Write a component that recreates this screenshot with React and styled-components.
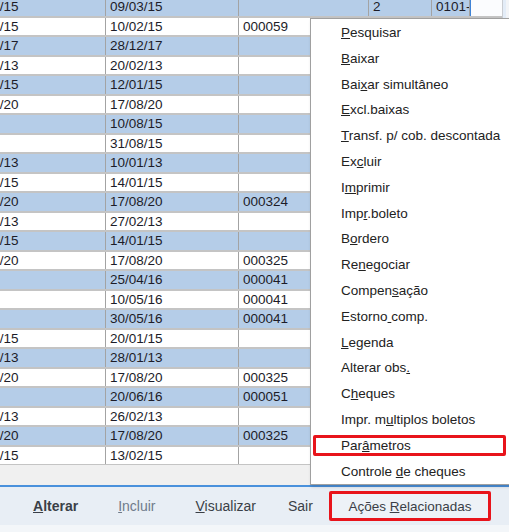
import React from "react";
import styled, { createGlobalStyle } from "styled-components";

const rows = [
  ["02/03/15", "09/03/15", "", "2", "0101-"],
  ["05/02/15", "10/02/15", "000059"],
  ["21/12/17", "28/12/17", ""],
  ["13/02/13", "20/02/13", ""],
  ["05/01/15", "12/01/15", ""],
  ["10/08/20", "17/08/20", ""],
  ["", "10/08/15", ""],
  ["", "31/08/15", ""],
  ["03/01/13", "10/01/13", ""],
  ["07/01/15", "14/01/15", ""],
  ["10/08/20", "17/08/20", "000324"],
  ["20/02/13", "27/02/13", ""],
  ["07/01/15", "14/01/15", ""],
  ["10/08/20", "17/08/20", "000325"],
  ["", "25/04/16", "000041"],
  ["", "10/05/16", "000041"],
  ["", "30/05/16", "000041"],
  ["13/01/15", "20/01/15", ""],
  ["21/01/13", "28/01/13", ""],
  ["10/08/20", "17/08/20", "000325"],
  ["", "20/06/16", "000051"],
  ["19/02/13", "26/02/13", ""],
  ["10/08/20", "17/08/20", "000325"],
  ["06/02/15", "13/02/15", ""],
];

// [before, mnemonic, after, highlighted]
const menuItems = [
  ["", "P", "esquisar"],
  ["", "B", "aixar"],
  ["Bai", "x", "ar simultâneo"],
  ["", "E", "xcl.baixas"],
  ["", "T", "ransf. p/ cob. descontada"],
  ["Ex", "c", "luir"],
  ["I", "m", "primir"],
  ["Imp", "r", ".boleto"],
  ["B", "o", "rdero"],
  ["Re", "n", "egociar"],
  ["Compen", "s", "ação"],
  ["Estorno", " ", "comp."],
  ["", "L", "egenda"],
  ["Alterar obs", ".", ""],
  ["C", "h", "eques"],
  ["Impr. m", "u", "ltiplos boletos"],
  ["Par", "â", "metros", true],
  ["Controle ", "d", "e cheques"],
];

const GlobalStyle = createGlobalStyle`
  body {
    margin: 0;
    background: #fff;
    font-family: "Liberation Sans", Arial, sans-serif;
    overflow: hidden;
  }
`;

function App() {
  return (
    <>
      <GlobalStyle />
      <Page>
        <GridArea>
          <TableView>
            <Table>
              {rows.map((r, i) => (
                <Row key={i} odd={i % 2 === 0}>
                  <Cell>{r[0]}</Cell>
                  <Cell>{r[1]}</Cell>
                  <Cell>{r[2]}</Cell>
                  <Cell>{r[3] || ""}</Cell>
                  <Cell>{r[4] || ""}</Cell>
                  <EditCell active={i === 0} />
                </Row>
              ))}
            </Table>
          </TableView>
          <VScroll />
        </GridArea>
        <HScroll />
        <Toolbar>
          <ToolButton bold>
            <u>A</u>lterar
          </ToolButton>
          <ToolButton muted>
            <u>I</u>ncluir
          </ToolButton>
          <ToolButton>
            <u>V</u>isualizar
          </ToolButton>
          <ToolButton narrow>Sair</ToolButton>
          <ActionsButton>
            <span>
              Ações <u>R</u>elacionadas
            </span>
          </ActionsButton>
        </Toolbar>
        <BottomStrip />

        <ContextMenu>
          {menuItems.map(([a, k, b, hl], i) => (
            <MenuItem key={i} highlighted={hl}>
              {a}
              <u>{k}</u>
              {b}
            </MenuItem>
          ))}
        </ContextMenu>
      </Page>
    </>
  );
}

export default App;

const Page = styled.div`
  position: relative;
  width: 509px;
  height: 532px;
  overflow: hidden;
  display: flex;
  flex-direction: column;
`;

const GridArea = styled.div`
  height: 465px;
  display: flex;
  overflow: hidden;
`;

const TableView = styled.div`
  flex: 1;
  overflow: hidden;
`;

const Table = styled.div`
  margin-top: -2px;
  margin-left: -38px;
  width: 541px;
`;

const Row = styled.div`
  display: grid;
  grid-template-columns: 144px 133px 130px 63px 38px 1fr;
  height: 19.5px;
  box-sizing: border-box;
  border-bottom: 2px solid #c4c4c4;
  background: ${({ odd }) => (odd ? "#b5cde8" : "#ffffff")};
`;

const Cell = styled.div`
  padding: 0 4px;
  border-right: 1px solid #a3a3a3;
  font-size: 13.5px;
  line-height: 18px;
  color: #1c1c28;
  white-space: nowrap;
  overflow: hidden;
`;

const EditCell = styled.div`
  background: ${({ active }) => (active ? "#fbfcfe" : "transparent")};
  border-left: ${({ active }) => (active ? "1.5px solid #3f83d6" : "none")};
`;

const VScroll = styled.div`
  width: 6px;
  background: #f2f4f7;
  border-left: 1px solid #c9ccd1;
  box-shadow: inset 3px 0 0 #e3ecf7;
`;

const HScroll = styled.div`
  height: 20px;
  background: #f0f0f0;
`;

const Toolbar = styled.div`
  height: 38px;
  border-top: 2px solid #4a91dc;
  background: #e8eef5;
  display: flex;
  align-items: center;
  padding-left: 13px;
`;

const ToolButton = styled.div`
  padding: ${({ narrow }) => (narrow ? "0 16px" : "0 20px")};
  margin-left: ${({ narrow }) => (narrow ? "-4px" : "0")};
  font-size: 14px;
  font-weight: ${({ bold }) => (bold ? "bold" : "normal")};
  color: ${({ muted }) => (muted ? "#6f7b8b" : "#3a3f47")};
  white-space: nowrap;
`;

const ActionsButton = styled.div`
  height: 30px;
  box-sizing: border-box;
  padding: 0 16.5px;
  display: flex;
  align-items: center;
  border: 3px solid #e8141b;
  border-radius: 2px;
  background: #edf2f7;
  font-size: 13.5px;
  color: #3a3f47;
  white-space: nowrap;
`;

const BottomStrip = styled.div`
  height: 7px;
  background: #f3f6f9;
`;

const ContextMenu = styled.div`
  position: absolute;
  left: 310px;
  top: 18px;
  width: 215px;
  box-sizing: border-box;
  padding-top: 1px;
  background: #fff;
  border: 1px solid #a0a0a0;
  box-shadow: 1px 2px 3px rgba(0, 0, 0, 0.15);
`;

const MenuItem = styled.div`
  position: relative;
  height: 25.8px;
  line-height: 25.8px;
  padding-left: 30px;
  font-size: 13.5px;
  color: #222;
  white-space: pre;

  &::after {
    content: "";
    display: ${({ highlighted }) => (highlighted ? "block" : "none")};
    position: absolute;
    left: 2px;
    top: 2px;
    width: 187px;
    bottom: 3px;
    border: 3px solid #e8141b;
    border-radius: 2px;
  }
`;
